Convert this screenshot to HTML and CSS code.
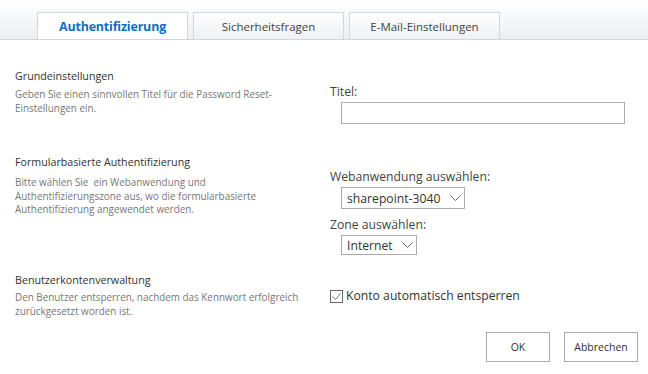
FILE: index.html
```html
<!DOCTYPE html>
<html lang="de">
<head>
<meta charset="utf-8">
<link rel="stylesheet" href="styles.css">
</head>
<body>
<div class="tabbar">
  <div class="tab active">Authentifizierung</div>
  <div class="tab">Sicherheitsfragen</div>
  <div class="tab">E-Mail-Einstellungen</div>
</div>

<div class="section s1">
  <div class="left">
    <div class="heading">Grundeinstellungen</div>
    <div class="desc">Geben Sie einen sinnvollen Titel für die Password Reset-<br>Einstellungen ein.</div>
  </div>
  <div class="right r1">
    <div class="label">Titel:</div>
    <div class="input"></div>
  </div>
</div>

<div class="section s2">
  <div class="left">
    <div class="heading">Formularbasierte Authentifizierung</div>
    <div class="desc desc2">Bitte wählen Sie&nbsp; ein Webanwendung und<br>Authentifizierungszone aus, wo die formularbasierte<br>Authentifizierung angewendet werden.</div>
  </div>
  <div class="right r2">
    <div class="label">Webanwendung auswählen:</div>
    <div class="select sel-web"><span>sharepoint-3040</span><svg width="11" height="6" viewBox="0 0 11 6"><path d="M0.5 0.5 L5.5 5.5 L10.5 0.5" fill="none" stroke="#666" stroke-width="1"/></svg></div>
    <div class="label label-zone">Zone auswählen:</div>
    <div class="select sel-zone"><span>Internet</span><svg width="11" height="6" viewBox="0 0 11 6"><path d="M0.5 0.5 L5.5 5.5 L10.5 0.5" fill="none" stroke="#666" stroke-width="1"/></svg></div>
  </div>
</div>

<div class="section s3">
  <div class="left">
    <div class="heading">Benutzerkontenverwaltung</div>
    <div class="desc desc3">Den Benutzer entsperren, nachdem das Kennwort erfolgreich<br>zurückgesetzt worden ist.</div>
  </div>
  <div class="right r3">
    <div class="check"><span class="box"><svg width="11" height="11" viewBox="0 0 11 11"><path d="M1.5 5.5 L4.5 8.5 L9.5 2.5" fill="none" stroke="#777" stroke-width="1"/></svg></span><span class="check-label">Konto automatisch entsperren</span></div>
  </div>
</div>

<div class="buttons">
  <div class="btn btn-ok">OK</div>
  <div class="btn btn-cancel">Abbrechen</div>
</div>
</body>
</html>
```
FILE: styles.css
```css
html, body {
  margin: 0;
  padding: 0;
  background: #fff;
  font-family: "Open Sans", "Noto Sans", sans-serif;
  color: #444;
}

.tabbar {
  height: 39px;
  border-bottom: 1px solid #d3d6da;
  background: linear-gradient(#ffffff, #eceef1);
  display: flex;
  align-items: flex-end;
  padding-left: 37px;
  gap: 5px;
}

.tab {
  width: 149px;
  height: 26px;
  border: 1px solid #d3d6da;
  border-bottom: none;
  background: linear-gradient(#ffffff, #eff0f3);
  display: flex;
  align-items: center;
  justify-content: center;
  font-size: 11.5px;
  color: #444;
  box-sizing: content-box;
  flex-shrink: 0;
}

.tab.active {
  background: #fff;
  color: #0f6fc6;
  font-weight: 700;
  font-size: 12.5px;
  letter-spacing: -0.2px;
}

.section {
  display: flex;
}

.s1 { margin-top: 28px; }
.s2 { margin-top: 30px; }
.s3 { margin-top: 17px; }

.left {
  width: 315px;
  padding-left: 15px;
  box-sizing: border-box;
}

.heading {
  font-size: 10.7px;
  line-height: 16px;
  color: #333;
}

.desc {
  margin-top: 4px;
  font-size: 9.9px;
  line-height: 13.5px;
  color: #777;
}

.desc2 { margin-top: 6px; }
.desc3 { margin-top: 3px; }

.right {
  flex: 1;
  padding-left: 15px;
}

.label {
  font-size: 12.2px;
  line-height: 16px;
  color: #444;
}

.r1 { padding-top: 16px; }
.r2 { padding-top: 15px; }
.r3 { padding-top: 16px; }

.input {
  margin: 2px 0 0 11px;
  width: 282px;
  height: 20px;
  border: 1px solid #ababab;
}

.select {
  margin: 2px 0 0 11px;
  height: 20px;
  border: 1px solid #ababab;
  display: flex;
  align-items: center;
  justify-content: space-between;
  padding: 0 2px 0 5px;
  font-size: 12.2px;
  color: #333;
  box-sizing: content-box;
}

.select svg { margin-right: 1px; }

.sel-web { width: 115px; }
.sel-zone { width: 67px; height: 18px; }

.label-zone { margin-top: 8px; }

.check {
  display: flex;
  align-items: center;
  gap: 3px;
}

.box {
  width: 11px;
  height: 11px;
  border: 1px solid #666;
  display: flex;
  align-items: center;
  justify-content: center;
}

.check-label {
  font-size: 12.2px;
  line-height: 16px;
  color: #333;
}

.buttons {
  display: flex;
  justify-content: flex-end;
  gap: 14px;
  padding-right: 10px;
  margin-top: 14px;
}

.btn {
  height: 28px;
  border: 1px solid #ababab;
  display: flex;
  align-items: center;
  justify-content: center;
  font-size: 10.5px;
  color: #333;
}

.btn-ok { width: 62px; }
.btn-cancel { width: 72px; }
```
